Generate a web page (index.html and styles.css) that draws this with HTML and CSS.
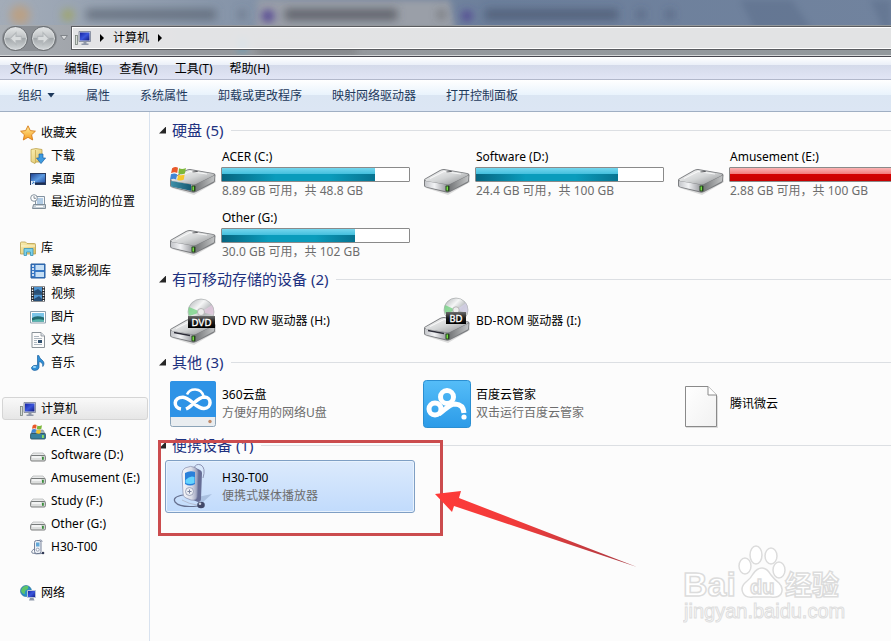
FILE: index.html
```
<!DOCTYPE html>
<html lang="zh-CN">
<head>
    <meta charset="utf-8">
    <title>计算机</title>
    <link rel="stylesheet" href="styles.css">
</head>
<body>
    <!-- shared icons -->
    <svg class="defs" width="0" height="0" aria-hidden="true">
        <defs>
            <linearGradient id="metal" x1="0" y1="0" x2="1" y2="1">
                <stop offset="0" stop-color="#fafafa"/><stop offset=".5" stop-color="#d3d5d6"/><stop offset="1" stop-color="#8b8d8f"/>
            </linearGradient>
            <linearGradient id="front" x1="0" y1="0" x2="1" y2="0">
                <stop offset="0" stop-color="#c4c6ca"/><stop offset=".4" stop-color="#f2f3f5"/><stop offset="1" stop-color="#8b8d92"/>
            </linearGradient>
            <linearGradient id="side" x1="0" y1="0" x2="1" y2="0">
                <stop offset="0" stop-color="#77797b"/><stop offset="1" stop-color="#c2c4c5"/>
            </linearGradient>
            <linearGradient id="sysFront" x1="0" y1="0" x2="1" y2="0">
                <stop offset="0" stop-color="#3f8fa8"/><stop offset="1" stop-color="#155a73"/>
            </linearGradient>
            <linearGradient id="disc" x1="0" y1="0" x2="1" y2="1">
                <stop offset="0" stop-color="#a9adb0"/><stop offset=".35" stop-color="#f5f6f6"/><stop offset=".6" stop-color="#b4b8ba"/><stop offset="1" stop-color="#ececec"/>
            </linearGradient>
            <linearGradient id="label" x1="0" y1="0" x2="0" y2="1">
                <stop offset="0" stop-color="#6b6b6b"/><stop offset=".5" stop-color="#1c1c1c"/><stop offset="1" stop-color="#000"/>
            </linearGradient>
            <linearGradient id="sky" x1="0" y1="0" x2="0" y2="1">
                <stop offset="0" stop-color="#55bdf8"/><stop offset="1" stop-color="#2c9be8"/>
            </linearGradient>
            <linearGradient id="screen" x1="0" y1="0" x2="1" y2="1">
                <stop offset="0" stop-color="#1522a0"/><stop offset=".5" stop-color="#3a55dc"/><stop offset="1" stop-color="#101a80"/>
            </linearGradient>
            <linearGradient id="desk" x1="0" y1="0" x2="1" y2="1">
                <stop offset="0" stop-color="#1d3f8e"/><stop offset=".5" stop-color="#5b9ae0"/><stop offset="1" stop-color="#1c3f93"/>
            </linearGradient>
            <linearGradient id="folder" x1="0" y1="0" x2="1" y2="1">
                <stop offset="0" stop-color="#fbf0b4"/><stop offset="1" stop-color="#dcbf62"/>
            </linearGradient>
            <linearGradient id="gold" x1="0" y1="0" x2="0" y2="1">
                <stop offset="0" stop-color="#fff0a0"/><stop offset="1" stop-color="#f69a1c"/>
            </linearGradient>
            <linearGradient id="page" x1="0" y1="0" x2="1" y2="1">
                <stop offset="0" stop-color="#fff"/><stop offset="1" stop-color="#f1f1f1"/>
            </linearGradient>
            <linearGradient id="player" x1="0" y1="0" x2="1" y2="0">
                <stop offset="0" stop-color="#f7f8fb"/><stop offset=".6" stop-color="#dadde8"/><stop offset="1" stop-color="#8f95b4"/>
            </linearGradient>
            <linearGradient id="pointer" x1="0" y1="0" x2="1" y2="0">
                <stop offset="0" stop-color="#ff3a38"/><stop offset=".4" stop-color="#f03c3b"/><stop offset="1" stop-color="#a83a42"/>
            </linearGradient>
        </defs>

        <symbol id="i-flag" viewBox="0 0 16 14">
            <path d="M2 2Q5 0 7.500 1.500L6.800 6.500Q4 5.200 1 6.800Z" fill="#e8592b"/>
            <path d="M8.500 2Q11.500 3.500 15 1.800L14 7Q11 8.200 7.800 7Z" fill="#7db83a"/>
            <path d="M.9 7.800Q4 6.200 6.600 7.600L5.800 12.600Q3 11.400 0 12.800Z" fill="#3f86d6"/>
            <path d="M7.600 8.200Q10.600 9.400 13.800 8L12.900 12.800Q10 14.200 6.800 13Z" fill="#f6c62c"/>
        </symbol>
        <symbol id="i-drive" viewBox="0 0 48 48">
            <path d="M3 38L25 45L47 32L46 28L25 38Z" fill="#000" opacity=".13"/>
            <path d="M1 30Q1 29 3 28L17 20Q19 19 21 19L44 23Q46.500 23.500 46.500 25L46 31Q46 32 44.500 33L27 42Q25 43 23 42.500L3 37.500Q1 37 1 35.500Z" fill="#7b7d80"/>
            <path d="M2 29.500L18 20.500Q19 20 21 20L44 23.800Q46 24.500 44.500 25.500L27 34Q25.500 34.700 23.500 34.300L3 31Z" fill="url(#metal)"/>
            <path d="M27 34.500L45.500 25.600L45 31.300L27 41Z" fill="url(#side)"/>
            <path d="M2 31L25.500 35L25 41.700L3 36.800Q2 36.500 2 35Z" fill="url(#front)"/>
            <ellipse cx="26" cy="21.700" rx="3" ry="1" fill="#55575a"/>
            <path d="M7 28.500L21 21.500L38 24" fill="none" stroke="#fff" stroke-width="1" opacity=".8"/>
            <rect x="22.500" y="35.500" width="4" height="6" rx="1" fill="#26451f"/>
            <rect x="23.500" y="36.500" width="1.500" height="4" fill="#72df41"/>
        </symbol>
        <symbol id="i-sysdrive" viewBox="0 0 48 48">
            <use href="#i-drive" width="48" height="48"/>
            <path d="M2 31L22 34.600V40.800L3 36.800Q2 36.500 2 35Z" fill="url(#sysFront)"/>
            <use href="#i-flag" x="1" y="16" width="17" height="15"/>
        </symbol>
        <symbol id="i-360" viewBox="0 0 48 48">
            <rect x="1.500" y="1.500" width="45" height="45" rx="2" fill="#e9edf0" stroke="#8ca4b8"/>
            <path d="M1 37V3Q1 1 3 1H45Q47 1 47 3V37Z" fill="#2e93e6"/>
            <path d="M12 29C4 28 4 17 14 17.200C22 18 27 29 35 28.500C43 28 43 17.500 35.500 17C28 17 24 26 17 29" fill="none" stroke="#fff" stroke-width="3.500"/>
            <path d="M18 14.500C21 7.500 32 7.500 34.500 16" fill="none" stroke="#fff" stroke-width="2.500"/>
            <circle cx="41" cy="41.500" r="1.700" fill="#c08a68"/>
        </symbol>
        <symbol id="i-pan" viewBox="0 0 48 48">
            <rect x=".5" y=".5" width="47" height="47" rx="3" fill="url(#sky)" stroke="#2b8fd2"/>
            <g fill="none" stroke="#fff" stroke-width="5">
                <circle cx="12" cy="29" r="6"/>
                <circle cx="24" cy="17" r="6.500"/>
                <path d="M16 34C22 30 26 24 32 24Q40.500 24.500 41 33"/>
            </g>
            <circle cx="41" cy="37" r="2.600" fill="#fff"/>
        </symbol>
        <symbol id="i-blank" viewBox="0 0 48 48">
            <path d="M9 7.500H32L41 16.500V48H9Z" fill="#000" opacity=".12"/>
            <path d="M8.500 6.500H31L39.500 15V46.500H8.500Z" fill="url(#page)" stroke="#8a8a8a"/>
            <path d="M31 6.500V15H39.500" fill="#fff" stroke="#8a8a8a"/>
        </symbol>
        <symbol id="i-player" viewBox="0 0 48 48">
            <path d="M24 35L43 31L34 39Z" fill="#6f86ad" opacity=".35"/>
            <path d="M25 5Q27 0 32 2Q37 5 34 15" fill="none" stroke="#8d94b5" stroke-width="1"/>
            <path d="M14 32Q3 34 6 39Q11 45 29 43" fill="none" stroke="#66708f" stroke-width="1.200"/>
            <path d="M13 37Q20 41 28 42" fill="none" stroke="#b5bdd2" stroke-width="1"/>
            <path d="M25 4L31 7Q33 8 33 10L32 36Q32 39 29 39L24 37Z" fill="#676e96"/>
            <path d="M16 5Q22 2 26 4.500Q29 6 29 9L28 34Q27 38 22 37L17 35Q14 34 14 30L13 11Q13 7 16 5Z" fill="url(#player)" stroke="#858dac" stroke-width=".7"/>
            <path d="M16 10Q21 7 26 9V21Q21 24 16 21Z" fill="#2b80d9"/>
            <path d="M16.500 17Q21 12 25.500 14V20Q21 22 16.500 20Z" fill="#65d4ff"/>
            <circle cx="20.500" cy="28.500" r="4" fill="#eceef4" stroke="#8e96af" stroke-width=".8"/>
            <path d="M18.500 28.500H22.500M20.500 26.500V30.500" stroke="#7b849f" stroke-width="1"/>
            <ellipse cx="32" cy="42" rx="3.800" ry="3.300" fill="#414868"/>
            <circle cx="31" cy="40.800" r="1.300" fill="#cdd3e2"/>
        </symbol>

        <symbol id="i-star" viewBox="0 0 16 16">
            <path d="M8 .8L10.300 5.600L15.400 6.200L11.600 9.800L12.700 15L8 12.300L3.300 15L4.400 9.800L.6 6.200L5.700 5.600Z" fill="url(#gold)" stroke="#d67b1a" stroke-width=".9"/>
        </symbol>
        <symbol id="i-download" viewBox="0 0 16 16">
            <path d="M1 1.500L6 .5L12 1.500V14H6L5 15.500L1 13.500Z" fill="url(#folder)" stroke="#bda24d" stroke-width=".8"/>
            <path d="M5.500 2V15" stroke="#c7aa52" stroke-width=".8"/>
            <path d="M9 6H13V10H15.600L11 15.600L6.500 10H9Z" fill="#3d9be0" stroke="#1d62a8" stroke-width=".7"/>
        </symbol>
        <symbol id="i-desktop" viewBox="0 0 16 16">
            <rect x=".5" y="2.500" width="15" height="11" fill="url(#desk)" stroke="#26395f"/>
            <path d="M1 11.500H15V13H1Z" fill="#1e2d4e"/>
            <rect x="1" y="10" width="4" height="4" fill="#e6f0fa"/>
            <path d="M2 13L4 11M2.500 11H4V12.500" stroke="#2671c4" stroke-width=".8" fill="none"/>
        </symbol>
        <symbol id="i-recent" viewBox="0 0 16 16">
            <path d="M5.500 2.500H14.500V12H5.500Z" fill="#f3f6f9" stroke="#8393a2"/>
            <path d="M7 5H13M7 7H13M7 9H13" stroke="#6fa0cf" stroke-width="1"/>
            <path d="M3.500 10.500H15.500V14.500H2.500Z" fill="#c7d1d9" stroke="#7f8c97"/>
            <path d="M6 12.500H13" stroke="#fff"/>
            <circle cx="4" cy="4" r="3.300" fill="#fff" stroke="#8794a0"/>
            <path d="M4 2V4.300H6" stroke="#65717d" fill="none" stroke-width=".8"/>
        </symbol>
        <symbol id="i-library" viewBox="0 0 16 16">
            <path d="M.5 3Q.5 2 1.500 2H5.500L7 3.500H14.500Q15.500 3.500 15.500 4.500V14H.5Z" fill="url(#folder)" stroke="#b99f4e" stroke-width=".8"/>
            <path d="M1 6H15" stroke="#fff8d4"/>
            <path d="M4 8.500H13V15.500H10.500V12H6.500V15.500H4Z" fill="#7bd0ea" stroke="#3a94b8" stroke-width=".8"/>
        </symbol>
        <symbol id="i-film" viewBox="0 0 16 16">
            <path d="M1 1H15V15H1Z" fill="#3677c4" stroke="#265c9e"/>
            <path d="M5.500 2H14V7H5.500ZM5.500 9H14V14H5.500Z" fill="#c6dff5"/>
            <path d="M2 3H4M2 6H4M2 9H4M2 12H4" stroke="#fff" stroke-width="1.500"/>
        </symbol>
        <symbol id="i-video" viewBox="0 0 16 16">
            <path d="M1 .5H15V15.500H1Z" fill="#22262c"/>
            <path d="M4 1H12V7.500H4ZM4 8.500H12V15H4Z" fill="#4d93cf"/>
            <path d="M4 5L8 3L12 6V7.500H4ZM4 13L9 10L12 13V15H4Z" fill="#284f77"/>
            <path d="M2.500 1V15M13.500 1V15" stroke="#fff" stroke-width="1.500" stroke-dasharray="1.300 1.300"/>
        </symbol>
        <symbol id="i-picture" viewBox="0 0 16 16">
            <path d="M.5 2.500H15.500V14H.5Z" fill="#fff" stroke="#8fa0ad"/>
            <path d="M2 4H14V12.500H2Z" fill="#7cc5e8"/>
            <path d="M2 9Q6 6 14 8.500V12.500H2Z" fill="#226b70"/>
            <path d="M2 11.500Q8 9.500 14 11V12.500H2Z" fill="#58b7ad"/>
        </symbol>
        <symbol id="i-doc" viewBox="0 0 16 16">
            <path d="M2 .5H11L14.500 4V15.500H2Z" fill="#fcfcfc" stroke="#8b9399"/>
            <path d="M11 .5V4H14.500" fill="#dde2e6" stroke="#8b9399" stroke-width=".8"/>
            <path d="M4 4.500H9M4 6.500H12M4 8.500H7M4 10.500H7M4 12.500H12" stroke="#99a4ae" stroke-width=".8"/>
            <rect x="8" y="8" width="4" height="3" fill="#31506f"/>
        </symbol>
        <symbol id="i-music" viewBox="0 0 16 16">
            <path d="M7.500 .5H8.800Q9.500 3.500 12 5Q15.500 7.800 12.800 11.500Q13.200 7.500 9 6.500V12.500Q8.500 15.500 4.500 15.500Q1.200 15 1.500 12.500Q2.500 9.800 7.500 10.300Z" fill="#2f8fd6" stroke="#1c629f" stroke-width=".7"/>
            <ellipse cx="4.500" cy="12" rx="1.800" ry="1" fill="#9bd7f7"/>
        </symbol>
        <symbol id="i-computer" viewBox="0 0 16 16">
            <rect x=".5" y="5.500" width="2" height="9" fill="#d8ddd9" stroke="#78837a" stroke-width=".8"/>
            <path d="M4 1.500H15.500V11.500H4Z" fill="#cdd2dc" stroke="#7a8296" stroke-width=".8"/>
            <path d="M5 2.500H14.500V10.500H5Z" fill="url(#screen)"/>
            <path d="M8.500 12H11.500V13.500H13.500V15H6.500V13.500H8.500Z" fill="#8f97a8"/>
        </symbol>
        <symbol id="i-mini" viewBox="0 0 16 16">
            <path d="M.8 8.500L3 6H13L15.200 8.500Z" fill="#e9eaea" stroke="#a3a6a6" stroke-width=".6"/>
            <rect x=".6" y="8.500" width="14.800" height="5.500" rx="1.200" fill="#dcdedd" stroke="#6d7170" stroke-width=".9"/>
            <path d="M2 10H11" stroke="#fafafa" stroke-width="1.500"/>
            <rect x="12" y="9.800" width="1.800" height="3" fill="#3b8d3c"/>
        </symbol>
        <symbol id="i-minisys" viewBox="0 0 16 16">
            <path d="M.8 10L3 6H13L15.200 10Z" fill="#9fb0b8" stroke="#78868e" stroke-width=".6"/>
            <rect x=".6" y="9.500" width="14.800" height="5.500" rx="1" fill="#37809e" stroke="#2a5465" stroke-width=".9"/>
            <rect x="12" y="11" width="1.800" height="3" fill="#8ee05c"/>
            <use href="#i-flag" x="1" y="0" width="12" height="10"/>
        </symbol>
        <symbol id="i-phone" viewBox="0 0 16 16">
            <path d="M9 1.500Q12 0 12 3" stroke="#7c88a0" fill="none"/>
            <rect x="4.500" y="1.500" width="6.500" height="13" rx="2" fill="#edf0f5" stroke="#77839b"/>
            <rect x="6" y="3.500" width="3.500" height="4" fill="#62a8d9"/>
            <circle cx="7.700" cy="10.700" r="1.500" fill="#fff" stroke="#77839b" stroke-width=".7"/>
            <path d="M4 10Q.5 12 2 14Q6 15.500 12 14.500" fill="none" stroke="#66738d" stroke-width=".8"/>
            <circle cx="13" cy="14" r="1.300" fill="#323a55"/>
        </symbol>
        <symbol id="i-network" viewBox="0 0 16 16">
            <circle cx="6" cy="6" r="5.500" fill="#2b8fc4" stroke="#226a96" stroke-width=".6"/>
            <path d="M2 3Q5 0 8 1Q9 4 6 5Q4 7 5 9Q2 9 1 6Z" fill="#5dc46a"/>
            <path d="M7.500 5.500H15.500V12.500H7.500Z" fill="url(#screen)" stroke="#b9c3d6"/>
            <path d="M10 13H13.500L14.500 15.500H9Z" fill="#8d97aa"/>
        </symbol>
    </svg>

    <header class="titlebar">
        <!-- windows showing through the glass frame -->
        <svg class="glass" viewBox="0 0 891 57" preserveAspectRatio="xMinYMin slice" aria-hidden="true">
            <defs>
                <filter id="soft" x="-20%" y="-60%" width="140%" height="220%"><feGaussianBlur stdDeviation="4"/></filter>
                <filter id="edge"><feGaussianBlur stdDeviation="3"/></filter>
                <linearGradient id="glassTop" x1="0" y1="0" x2="1" y2="0">
                    <stop offset="0" stop-color="#a3acb8"/><stop offset=".28" stop-color="#8493a8"/><stop offset=".55" stop-color="#6c7f9b"/><stop offset="1" stop-color="#71839e"/>
                </linearGradient>
                <linearGradient id="glassLow" x1="0" y1="0" x2="1" y2="0">
                    <stop offset="0" stop-color="#a9aeb4"/><stop offset=".2" stop-color="#96999e"/><stop offset="1" stop-color="#92989c"/>
                </linearGradient>
            </defs>
            <rect width="891" height="57" fill="url(#glassTop)"/>
            <path d="M258 0H450L455 30H256Z" fill="#9a9fa8" filter="url(#edge)"/>
            <path d="M740 0H792L812 30H755ZM870 0H891V30H884Z" fill="#596b87" opacity=".45" filter="url(#edge)"/>
            <g filter="url(#soft)">
                <circle cx="20" cy="15" r="10" fill="#c49c72" opacity=".7"/>
                <circle cx="68" cy="15" r="6" fill="#a0a667"/>
                <rect x="86" y="9" width="130" height="11" fill="#555f6c" opacity=".65"/>
                <rect x="239" y="10" width="6" height="9" fill="#57616f" opacity=".6"/>
                <circle cx="268" cy="16" r="6" fill="#4b3a91"/>
                <rect x="285" y="9" width="112" height="11" fill="#484c55" opacity=".7"/>
                <rect x="438" y="10" width="7" height="9" fill="#555" opacity=".6"/>
                <circle cx="467" cy="16" r="5" fill="#4c3b92"/>
                <rect x="485" y="9" width="133" height="11" fill="#3e4d65" opacity=".55"/>
                <rect x="638" y="10" width="6" height="9" fill="#42506a" opacity=".6"/>
                <rect x="667" y="10" width="6" height="9" fill="#42506a" opacity=".6"/>
            </g>
            <rect y="25" width="891" height="32" fill="url(#glassLow)"/>
            <g filter="url(#soft)">
                <rect x="240" y="38" width="5" height="14" fill="#4b9fc4"/>
                <rect x="257" y="47" width="100" height="7" fill="#666" opacity=".5"/>
            </g>
        </svg>
        <div class="address-row">
            <div class="history">
                <button class="round" aria-label="后退"><svg viewBox="0 0 16 16"><path d="M8.500 2.500L3 8L8.500 13.500V10H13.500V6H8.500Z"/></svg></button>
                <button class="round" aria-label="前进"><svg viewBox="0 0 16 16"><path d="M7.500 2.500L13 8L7.500 13.500V10H2.500V6H7.500Z"/></svg></button>
            </div>
            <button class="recent" aria-label="最近的页面"><svg viewBox="0 0 8 6"><path d="M.5 .5H7.500L4 5Z"/></svg></button>
            <div class="address">
                <svg class="icon" aria-hidden="true"><use href="#i-computer"/></svg>
                <span class="chevron"></span>
                <button class="crumb">计算机</button>
                <span class="chevron"></span>
            </div>
        </div>
    </header>

    <nav class="menubar">
        <button>文件(F)</button>
        <button>编辑(E)</button>
        <button>查看(V)</button>
        <button>工具(T)</button>
        <button>帮助(H)</button>
    </nav>

    <div class="toolbar">
        <button>组织<span class="caret"></span></button>
        <button>属性</button>
        <button>系统属性</button>
        <button>卸载或更改程序</button>
        <button>映射网络驱动器</button>
        <button>打开控制面板</button>
    </div>

    <div class="window">
        <nav class="sidebar">
            <ul>
                <li><a href="#"><svg class="icon"><use href="#i-star"/></svg>收藏夹</a></li>
                <li class="sub"><a href="#"><svg class="icon"><use href="#i-download"/></svg>下载</a></li>
                <li class="sub"><a href="#"><svg class="icon"><use href="#i-desktop"/></svg>桌面</a></li>
                <li class="sub"><a href="#"><svg class="icon"><use href="#i-recent"/></svg>最近访问的位置</a></li>
            </ul>
            <ul>
                <li><a href="#"><svg class="icon"><use href="#i-library"/></svg>库</a></li>
                <li class="sub"><a href="#"><svg class="icon"><use href="#i-film"/></svg>暴风影视库</a></li>
                <li class="sub"><a href="#"><svg class="icon"><use href="#i-video"/></svg>视频</a></li>
                <li class="sub"><a href="#"><svg class="icon"><use href="#i-picture"/></svg>图片</a></li>
                <li class="sub"><a href="#"><svg class="icon"><use href="#i-doc"/></svg>文档</a></li>
                <li class="sub"><a href="#"><svg class="icon"><use href="#i-music"/></svg>音乐</a></li>
            </ul>
            <ul>
                <li class="current"><a href="#"><svg class="icon"><use href="#i-computer"/></svg>计算机</a></li>
                <li class="sub"><a href="#"><svg class="icon"><use href="#i-minisys"/></svg>ACER (C:)</a></li>
                <li class="sub"><a href="#"><svg class="icon"><use href="#i-mini"/></svg>Software (D:)</a></li>
                <li class="sub"><a href="#"><svg class="icon"><use href="#i-mini"/></svg>Amusement (E:)</a></li>
                <li class="sub"><a href="#"><svg class="icon"><use href="#i-mini"/></svg>Study (F:)</a></li>
                <li class="sub"><a href="#"><svg class="icon"><use href="#i-mini"/></svg>Other (G:)</a></li>
                <li class="sub"><a href="#"><svg class="icon"><use href="#i-phone"/></svg>H30-T00</a></li>
            </ul>
            <ul>
                <li><a href="#"><svg class="icon"><use href="#i-network"/></svg>网络</a></li>
            </ul>
        </nav>

        <main class="content">
            <section class="group">
                <h2>硬盘 (5)</h2>
                <div class="items drives">
                    <a class="item" href="#">
                        <svg class="big"><use href="#i-sysdrive"/></svg>
                        <div class="info">
                            <div class="name">ACER (C:)</div>
                            <div class="bar"><div class="fill" style="width: 82%"></div></div>
                            <div class="note">8.89 GB 可用，共 48.8 GB</div>
                        </div>
                    </a>
                    <a class="item" href="#">
                        <svg class="big"><use href="#i-drive"/></svg>
                        <div class="info">
                            <div class="name">Software (D:)</div>
                            <div class="bar"><div class="fill" style="width: 76%"></div></div>
                            <div class="note">24.4 GB 可用，共 100 GB</div>
                        </div>
                    </a>
                    <a class="item" href="#">
                        <svg class="big"><use href="#i-drive"/></svg>
                        <div class="info">
                            <div class="name">Amusement (E:)</div>
                            <div class="bar"><div class="fill full" style="width: 97%"></div></div>
                            <div class="note">2.88 GB 可用，共 100 GB</div>
                        </div>
                    </a>
                    <a class="item" href="#">
                        <svg class="big"><use href="#i-drive"/></svg>
                        <div class="info">
                            <div class="name">Other (G:)</div>
                            <div class="bar"><div class="fill" style="width: 71%"></div></div>
                            <div class="note">30.0 GB 可用，共 102 GB</div>
                        </div>
                    </a>
                </div>
            </section>

            <section class="group">
                <h2>有可移动存储的设备 (2)</h2>
                <div class="items">
                    <a class="item" href="#">
                        <svg class="big" viewBox="0 0 48 48">
                            <circle cx="32" cy="15" r="13" fill="url(#disc)" stroke="#9b9ea0" stroke-width=".6"/>
                            <path d="M32 15L20 10Q18.500 15 20.500 19Z" fill="#6fd07d" opacity=".75"/>
                            <path d="M32 15L43 8Q45.500 13 44.500 18Z" fill="#e8c9e2" opacity=".7"/>
                            <circle cx="32" cy="15" r="3.500" fill="#ececec" stroke="#aaa" stroke-width=".8"/>
                            <use href="#i-drive" y="3" width="48" height="48"/>
                            <path d="M5 35.500L21 38.500" stroke="#2d2d38" stroke-width="1.300"/>
                            <rect x="19" y="19" width="27" height="12" fill="url(#label)"/>
                            <text x="32.500" y="28.500" text-anchor="middle" class="disc-text">DVD</text>
                        </svg>
                        <div class="info"><div class="name">DVD RW 驱动器 (H:)</div></div>
                    </a>
                    <a class="item" href="#">
                        <svg class="big" viewBox="0 0 48 48">
                            <circle cx="33" cy="13" r="12" fill="url(#disc)" stroke="#9b9ea0" stroke-width=".6"/>
                            <path d="M33 13L22 8Q20.500 13 22.500 17Z" fill="#6fd07d" opacity=".75"/>
                            <path d="M33 13L43 6Q45.500 11 44.500 16Z" fill="#d9d3ee" opacity=".7"/>
                            <circle cx="33" cy="13" r="3.200" fill="#ececec" stroke="#aaa" stroke-width=".8"/>
                            <use href="#i-drive" y="1" width="48" height="48"/>
                            <path d="M5 33.500L21 36.500" stroke="#2d2d38" stroke-width="1.300"/>
                            <rect x="23" y="15" width="20" height="12" fill="url(#label)"/>
                            <text x="33" y="24.500" text-anchor="middle" class="disc-text">BD</text>
                        </svg>
                        <div class="info"><div class="name">BD-ROM 驱动器 (I:)</div></div>
                    </a>
                </div>
            </section>

            <section class="group">
                <h2>其他 (3)</h2>
                <div class="items">
                    <a class="item" href="#">
                        <svg class="big"><use href="#i-360"/></svg>
                        <div class="info">
                            <div class="name">360云盘</div>
                            <div class="note">方便好用的网络U盘</div>
                        </div>
                    </a>
                    <a class="item" href="#">
                        <svg class="big"><use href="#i-pan"/></svg>
                        <div class="info">
                            <div class="name">百度云管家</div>
                            <div class="note">双击运行百度云管家</div>
                        </div>
                    </a>
                    <a class="item" href="#">
                        <svg class="big"><use href="#i-blank"/></svg>
                        <div class="info"><div class="name">腾讯微云</div></div>
                    </a>
                </div>
            </section>

            <section class="group marked">
                <h2>便携设备 (1)</h2>
                <div class="items">
                    <a class="item selected" href="#">
                        <svg class="big"><use href="#i-player"/></svg>
                        <div class="info">
                            <div class="name">H30-T00</div>
                            <div class="note">便携式媒体播放器</div>
                        </div>
                    </a>
                </div>
                <div class="frame"></div>
                <svg class="arrow" viewBox="0 0 202 78" aria-hidden="true">
                    <path d="M0 4L26 1L24 8L202 77L19 16L17 22Z" fill="url(#pointer)"/>
                </svg>
            </section>

            <svg class="watermark" viewBox="0 0 166 82" role="img" aria-label="Baidu经验">
                <g fill="#fff" stroke="#dcdcdc" stroke-width="1.500">
                    <ellipse cx="62" cy="22" rx="6" ry="8"/>
                    <ellipse cx="73" cy="11" rx="6" ry="9"/>
                    <ellipse cx="88" cy="12" rx="6" ry="8"/>
                    <ellipse cx="96" cy="26" rx="6" ry="8"/>
                    <path d="M79 24Q84 24 88 31Q91 35 96 39Q101 44 98 50Q95 54 88 53H70Q62 54 60 49Q57 43 63 38Q68 34 70 30Q74 24 79 24Z"/>
                    <text class="wm-latin" x="0" y="52">Bai</text>
                    <text class="wm-paw" x="67" y="50">du</text>
                    <text class="wm-cjk" x="102" y="51">经验</text>
                </g>
                <text class="wm-url" x="1" y="74">jingyan.baidu.com</text>
            </svg>
        </main>
    </div>
</body>
</html>
```
FILE: styles.css
```
* {
    box-sizing: border-box;
}
body {
    margin: 0;
    min-height: 100vh;
    display: flex;
    flex-direction: column;
    font-family: "Noto Sans", "Noto Sans CJK SC", sans-serif;
    font-size: 12px;
    line-height: 18px;
    color: #000;
    background: #fcfcfc;
    overflow: hidden;
}
button {
    font: inherit;
    color: inherit;
    border: none;
    background: none;
    padding: 0;
    cursor: pointer;
}
a {
    color: inherit;
    text-decoration: none;
}
.defs {
    position: absolute;
}
.icon {
    width: 16px;
    height: 16px;
    flex: none;
}

/* title bar */
.titlebar {
    position: relative;
    padding: 25px 0 5px;
    border-bottom: 1px solid #45454d;
    box-shadow: inset 0 -1px #d5d7d9;
    overflow: hidden;
}
.glass {
    position: absolute;
    top: 0;
    left: 0;
    width: 100%;
    height: 100%;
    z-index: -1;
}
.address-row {
    display: flex;
    align-items: center;
    height: 26px;
}
.history {
    display: flex;
    gap: 3px;
    margin-left: 2px;
    padding: 0 1px;
    border-radius: 13px;
    background: rgba(120, 124, 128, 0.6);
}
.round {
    display: flex;
    align-items: center;
    justify-content: center;
    width: 25px;
    height: 25px;
    border: 1px solid #686c70;
    border-radius: 50%;
    background: linear-gradient(#e4e6e7, #bfc3c5 45%, #a3a8ab 50%, #d2d6d8);
    box-shadow: inset 0 0 1px 1px #d9dcde;
}
.round svg {
    width: 17px;
    height: 17px;
    fill: #d9dcdd;
    stroke: #b4b8bb;
}
.recent {
    width: 8px;
    margin: 0 3px;
    line-height: 0;
}
.recent svg {
    width: 8px;
    height: 6px;
    fill: #d9dbdd;
    stroke: #80858a;
}
.address {
    flex: 1;
    display: flex;
    align-items: center;
    gap: 9px;
    height: 24px;
    padding-left: 3px;
    border: 1px solid #5a5c60;
    border-right: none;
    box-shadow: inset 0 1px #fff, inset 0 -1px #fff, inset 1px 0 #fff;
    background: rgba(240, 240, 241, 0.85);
}
.chevron {
    width: 4px;
    height: 8px;
    background: #000;
    clip-path: polygon(0 0, 100% 50%, 0 100%);
}

/* menus */
.menubar {
    display: flex;
    align-items: center;
    gap: 17px;
    height: 23px;
    padding: 2px 0 0 10px;
    border-bottom: 1px solid #b2b8cb;
    background: linear-gradient(#fff, #eaeff8 8px, #d4daea 8px, #e1e5f5);
}
.toolbar {
    display: flex;
    align-items: center;
    gap: 30px;
    height: 32px;
    padding-left: 18px;
    color: #1e395b;
    border-bottom: 1px solid #a0afc3;
    background: linear-gradient(#fff, #e9f3fc 15px, #dbe6f3 15px, #dce6f4);
}
.menubar button, .toolbar button {
    white-space: nowrap;
}
.caret {
    display: inline-block;
    width: 8px;
    height: 5px;
    margin: 0 1px 2px 5px;
    background: #1e395b;
    clip-path: polygon(0 0, 100% 0, 50% 100%);
}

.window {
    flex: 1;
    display: flex;
}

/* tree */
.sidebar {
    width: 150px;
    flex: none;
    padding-top: 9px;
    border-right: 1px solid #d8e2ef;
}
.sidebar ul {
    list-style: none;
    margin: 0 0 23px;
    padding: 0;
}
.sidebar a {
    display: flex;
    align-items: center;
    gap: 5px;
    height: 23px;
    padding-left: 20px;
    white-space: nowrap;
}
.sidebar .sub a {
    padding-left: 30px;
}
.sidebar .current a {
    margin: 0 1px 0 2px;
    padding-left: 17px;
    border: 1px solid #d5d5d5;
    border-radius: 3px;
    background: linear-gradient(#f9f9f9, #e6e6e6);
}

/* device list */
.content {
    flex: 1;
    min-width: 0;
    position: relative;
    padding: 7px 0 0 8px;
    overflow: hidden;
}
.group {
    margin-bottom: 4px;
}
.group h2 {
    display: flex;
    align-items: center;
    gap: 6px;
    height: 22px;
    margin: 0 0 4px;
    padding-left: 1px;
    font-size: 15px;
    font-weight: normal;
    color: #1e3280;
    white-space: nowrap;
}
.group h2::before {
    content: "";
    width: 7px;
    height: 7px;
    background: #262626;
    clip-path: polygon(100% 0, 100% 100%, 0 100%);
}
.group h2::after {
    content: "";
    flex: 1;
    height: 1px;
    margin-left: 2px;
    background: #dcdfe3;
}
.items {
    display: grid;
    grid-template-columns: repeat(3, 250px);
    gap: 3px 4px;
    padding-left: 7px;
}
.item {
    display: flex;
    align-items: center;
    gap: 4px;
    min-height: 53px;
    padding: 0 4px 0 3px;
    border: 1px solid transparent;
    border-radius: 3px;
}
.drives .item {
    min-height: 58px;
}
.item.selected {
    border-color: #7f9fc4;
    background: linear-gradient(#dceafc, #c1dbfc);
    box-shadow: inset 0 0 0 1px #e8f2fd;
}
.big {
    width: 48px;
    height: 48px;
    flex: none;
}
.info {
    flex: 1;
}
.name, .note {
    padding-left: 1px;
    white-space: nowrap;
}
.note {
    color: #6d6d6d;
}
.bar {
    height: 15px;
    margin-top: 1px;
    border: 1px solid #8a8a8a;
    border-radius: 1px;
    background: #fff;
}
.fill {
    height: 100%;
    background: linear-gradient(#74d6ee, #45c0de 45%, transparent 45%), linear-gradient(90deg, #066580, #0a9cbc 35%, #0a9cbc 70%, #077390);
}
.fill.full {
    background: linear-gradient(#fbb5b5, #f27a7a 45%, #d40000 45%, #c80000);
}
.disc-text {
    font: 9px "DejaVu Sans", sans-serif;
    fill: #fff;
    stroke: #fff;
    stroke-width: 0.3px;
}

/* highlight over the last group */
.marked {
    position: relative;
}
.frame {
    position: absolute;
    top: 6px;
    left: 0;
    width: 285px;
    height: 96px;
    border: 3px solid #cb4c4e;
}
.arrow {
    position: absolute;
    top: 56px;
    left: 277px;
    width: 202px;
    height: 78px;
}

.watermark {
    position: absolute;
    right: 42px;
    bottom: 15px;
    width: 166px;
    height: 82px;
}
.wm-latin {
    font: bold 34px "Liberation Sans", sans-serif;
}
.wm-paw {
    font: bold 20px "Liberation Sans", sans-serif;
}
.wm-cjk {
    font: bold 27px "Noto Sans CJK SC", sans-serif;
}
.wm-url {
    font: 20px "Liberation Sans", sans-serif;
    fill: #fff;
    stroke: #dedede;
    stroke-width: 1px;
}
```
